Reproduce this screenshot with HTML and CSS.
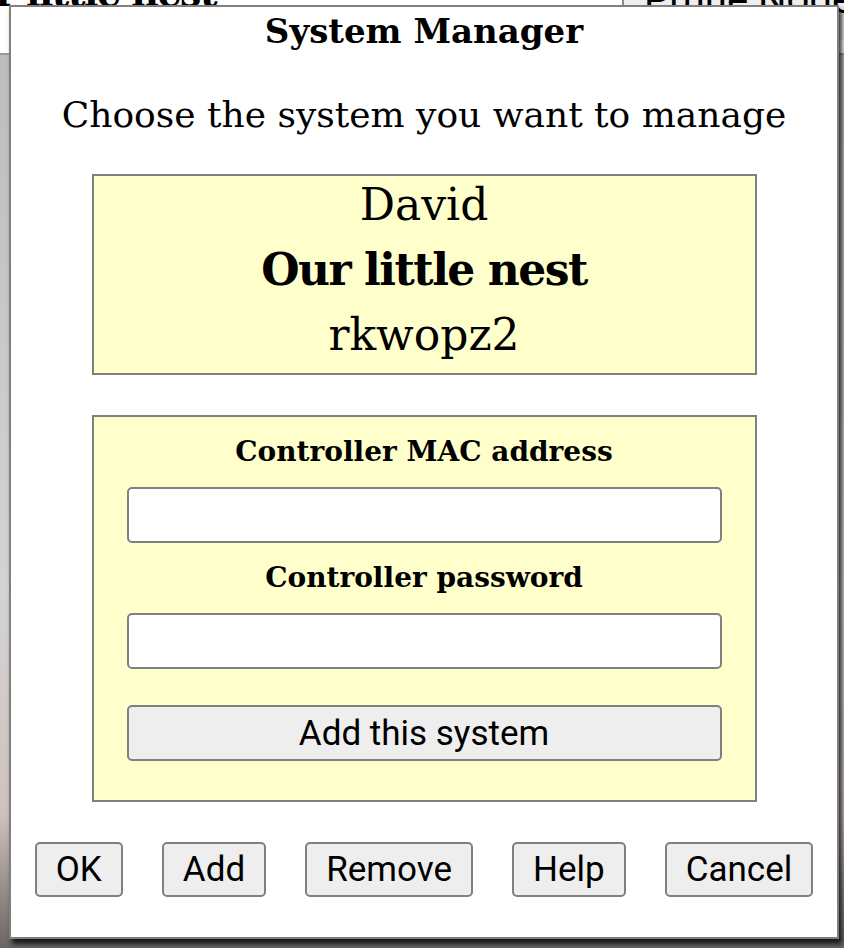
FILE: index.html
```html
<!DOCTYPE html>
<html>
<head>
<meta charset="utf-8">
<link rel="stylesheet" href="styles.css">
</head>
<body>
<div class="page">
  <div class="page-header">
    <div class="page-title">Our little nest</div>
    <div class="page-action">Prune Nodes</div>
  </div>
  <div class="page-body"></div>
</div>

<div class="dialog">
  <div class="dlg-title">System Manager</div>
  <div class="dlg-sub">Choose the system you want to manage</div>
  <div class="system-card">
    <div class="sys-line">David</div>
    <div class="sys-line sys-name">Our little nest</div>
    <div class="sys-line">rkwopz2</div>
  </div>
  <div class="add-card">
    <div class="field-label">Controller MAC address</div>
    <input class="field-input" type="text">
    <div class="field-label">Controller password</div>
    <input class="field-input" type="password">
    <button class="add-btn">Add this system</button>
  </div>
  <div class="dlg-buttons">
    <button class="dlg-btn">OK</button>
    <button class="dlg-btn">Add</button>
    <button class="dlg-btn">Remove</button>
    <button class="dlg-btn">Help</button>
    <button class="dlg-btn">Cancel</button>
  </div>
</div>
</body>
</html>
```

FILE: styles.css
```css
html, body {
  margin: 0;
  padding: 0;
}
body {
  width: 844px;
  height: 948px;
  overflow: hidden;
  position: relative;
  font-family: "DejaVu Serif", serif;
  background: #d0c8c6;
}
.page {
  display: flex;
  flex-direction: column;
  height: 948px;
}
.page-header {
  height: 53px;
  background: #ffffff;
  border-bottom: 2px solid #9a9a9a;
  display: flex;
  justify-content: space-between;
  align-items: flex-start;
}
.page-title {
  font-family: "DejaVu Serif", serif;
  font-weight: bold;
  font-size: 38px;
  line-height: 38px;
  margin-top: -26px;
  margin-left: -62px;
  letter-spacing: -1.5px;
  color: #000;
}
.page-action {
  margin-top: -20px;
  width: 200px;
  height: 60px;
  background: #eeeeee;
  border-left: 2px solid #8a8a8a;
  font-family: "Roboto", sans-serif;
  font-size: 40px;
  line-height: 40px;
  padding-left: 20px;
  color: #000;
  white-space: nowrap;
  overflow: hidden;
}
.page-body {
  flex: 1;
  background: linear-gradient(to bottom, #bdbdbd 0%, #d4d4d4 60%, #cfc2be 85%, #6a6462 100%);
}

.dialog {
  position: absolute;
  left: 9px;
  top: 5px;
  width: 830px;
  height: 934px;
  box-sizing: border-box;
  border: 2px solid #808080;
  background: #ffffff;
  box-shadow: 3px 5px 5px rgba(0, 0, 0, 0.8);
  display: flex;
  flex-direction: column;
  align-items: center;
  color: #000;
}
.dlg-title {
  font-weight: bold;
  font-size: 34px;
  line-height: 48px;
}
.dlg-sub {
  font-size: 36px;
  line-height: 60px;
  margin-top: 30px;
}
.system-card {
  margin-top: 29px;
  width: 665px;
  box-sizing: border-box;
  border: 2px solid #808080;
  background: #ffffcc;
  padding: 0 0 9px;
  display: flex;
  flex-direction: column;
  gap: 7px;
  text-align: center;
}
.sys-line {
  font-size: 44px;
  line-height: 58px;
}
.sys-name {
  font-weight: bold;
  letter-spacing: -1.5px;
}
.add-card {
  margin-top: 40px;
  width: 665px;
  box-sizing: border-box;
  border: 2px solid #808080;
  background: #ffffcc;
  padding: 0 33px 39px;
  display: flex;
  flex-direction: column;
  align-items: stretch;
}
.field-label {
  font-weight: bold;
  font-size: 28px;
  line-height: 70px;
  text-align: center;
}
.field-input {
  height: 56px;
  box-sizing: border-box;
  border: 2px solid #808080;
  border-radius: 5px;
  background: #ffffff;
  margin: 0;
  font-size: 28px;
}
.add-btn {
  margin-top: 36px;
  height: 56px;
  box-sizing: border-box;
  border: 2px solid #808080;
  border-radius: 5px;
  background: #eeeeee;
  font-family: "Roboto", sans-serif;
  font-size: 35px;
  color: #000;
  padding: 0;
}
.dlg-buttons {
  margin-top: 40px;
  display: flex;
  gap: 39px;
  justify-content: center;
}
.dlg-btn {
  height: 55px;
  box-sizing: border-box;
  border: 2px solid #808080;
  border-radius: 5px;
  background: #eeeeee;
  font-family: "Roboto", sans-serif;
  font-size: 35px;
  color: #000;
  padding: 0 19px;
}
```
